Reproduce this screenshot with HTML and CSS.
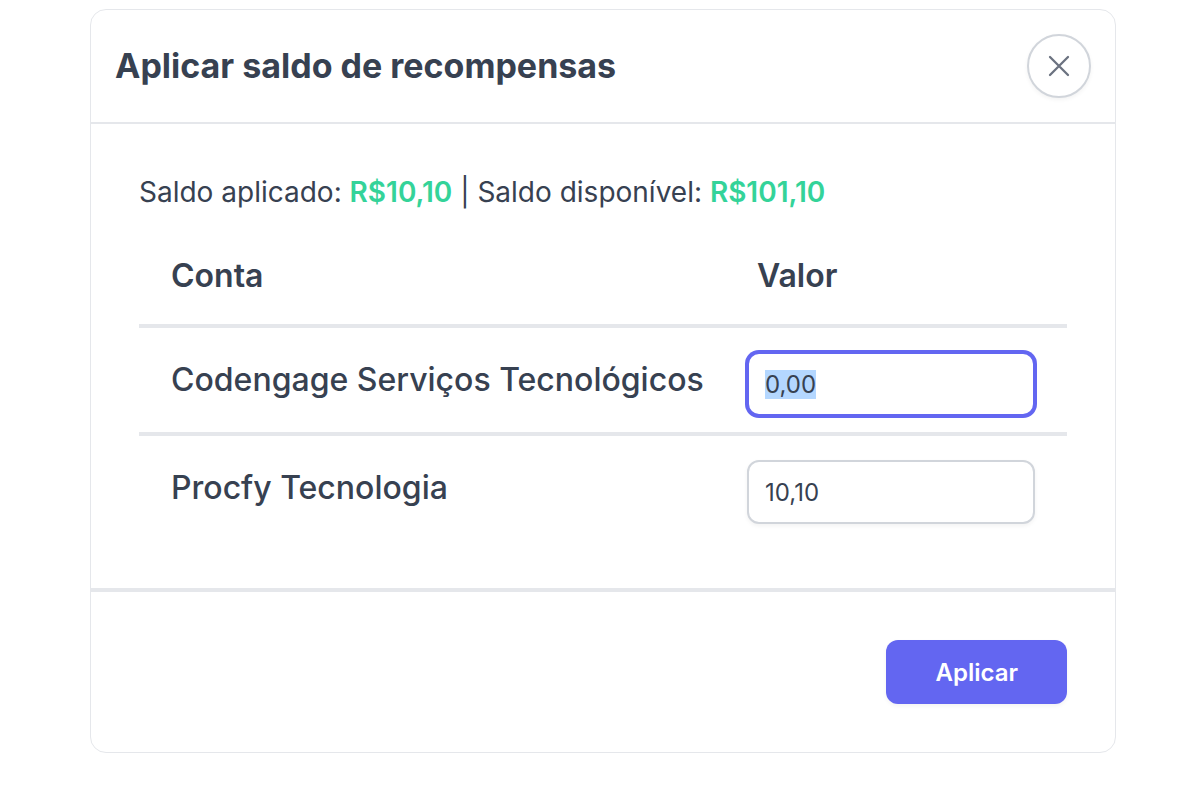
FILE: index.html
```html
<!DOCTYPE html>
<html lang="pt-BR">
<head>
    <meta charset="UTF-8">
    <meta name="viewport" content="width=device-width, initial-scale=1.0">
    <title>Aplicar saldo de recompensas</title>
    <link rel="stylesheet" href="styles.css">
</head>
<body>
    <form class="modal" id="rewardsForm" role="dialog" aria-labelledby="modalTitle">
        <header class="modal-header">
            <h1 id="modalTitle">Aplicar saldo de recompensas</h1>
            <button type="button" class="close" aria-label="Fechar">
                <svg width="24" height="24" viewBox="0 0 24 24" fill="none" stroke="currentColor" stroke-width="2.3" stroke-linecap="round">
                    <path d="M3 3l18 18M21 3L3 21"/>
                </svg>
            </button>
        </header>

        <div class="modal-body">
            <p class="balance">Saldo aplicado: <strong>R$10,10</strong> | Saldo disponível: <strong>R$101,10</strong></p>

            <table class="accounts">
                <thead>
                    <tr>
                        <th scope="col">Conta</th>
                        <th scope="col" class="value-col">Valor</th>
                    </tr>
                </thead>
                <tbody>
                    <tr>
                        <td><label for="codengage">Codengage Serviços Tecnológicos</label></td>
                        <td class="value"><input type="text" id="codengage" name="codengage" inputmode="decimal" value="0,00"></td>
                    </tr>
                    <tr>
                        <td><label for="procfy">Procfy Tecnologia</label></td>
                        <td class="value"><input type="text" id="procfy" name="procfy" inputmode="decimal" value="10,10"></td>
                    </tr>
                </tbody>
            </table>
        </div>

        <footer class="modal-footer">
            <button type="submit" class="submit">Aplicar</button>
        </footer>
    </form>

    <script>
        document.getElementById('rewardsForm').addEventListener('submit', function(event) {
            event.preventDefault();
        });

        // Start with the first value ready to be typed over
        const firstInput = document.getElementById('codengage');
        firstInput.focus();
        firstInput.select();
    </script>
</body>
</html>
```
FILE: styles.css
```css
* {
    box-sizing: border-box;
}
body {
    margin: 0;
    padding: 9px 84px 40px 90px;
    font-family: Inter, "Liberation Sans", sans-serif;
    color: #374151;
    background-color: #fff;
}
.modal {
    border: 1px solid #e5e7eb;
    border-radius: 16px;
    background-color: #fff;
}
.modal-header {
    display: flex;
    justify-content: space-between;
    align-items: center;
    padding: 24px;
    border-bottom: 2px solid #e5e7eb;
}
h1 {
    margin: 0;
    font-size: 34px;
    line-height: 40px;
    font-weight: 700;
}
.close {
    display: flex;
    justify-content: center;
    align-items: center;
    width: 64px;
    height: 64px;
    padding: 0;
    color: #6b7280;
    background-color: #fff;
    border: 2px solid #d1d5db;
    border-radius: 50%;
    box-shadow: 0 2px 4px rgba(0, 0, 0, 0.05);
    cursor: pointer;
}
.modal-body {
    padding: 48px;
}
.balance {
    margin: 0 0 16px;
    font-size: 28px;
    line-height: 40px;
}
.balance strong {
    font-weight: 600;
    color: #34d399;
}
.accounts {
    width: 100%;
    border-collapse: separate;
    border-spacing: 0;
    font-size: 32px;
    line-height: 48px;
}
th {
    padding: 24px 32px;
    font-weight: 600;
    text-align: left;
    border-bottom: 4px solid #e5e7eb;
}
.value-col {
    width: 352px;
    padding-left: 42px;
}
td {
    padding: 0 0 0 32px;
    font-weight: 500;
    border-bottom: 4px solid #e5e7eb;
}
tr:last-child td {
    border-bottom: none;
}
.value {
    padding: 24px 32px 16px;
}
input {
    display: block;
    width: 100%;
    height: 64px;
    padding: 0 16px;
    font-family: inherit;
    font-size: 24px;
    color: #374151;
    background-color: #fff;
    border: 2px solid #d1d5db;
    border-radius: 12px;
    box-shadow: 0 2px 4px rgba(0, 0, 0, 0.05);
}
input:focus {
    outline: none;
    border-color: #6366f1;
    box-shadow: 0 0 0 2px #6366f1;
}
input::selection {
    color: #374151;
    background-color: #b4d7ff;
}
.modal-footer {
    display: flex;
    justify-content: flex-end;
    padding: 48px;
    border-top: 4px solid #e5e7eb;
}
.submit {
    height: 64px;
    padding: 0 49px;
    font-family: inherit;
    font-size: 24px;
    font-weight: 600;
    color: #fff;
    background-color: #6366f1;
    border: none;
    border-radius: 12px;
    box-shadow: 0 2px 4px rgba(0, 0, 0, 0.05);
    cursor: pointer;
}
.submit:hover {
    background-color: #4f46e5;
}
```
